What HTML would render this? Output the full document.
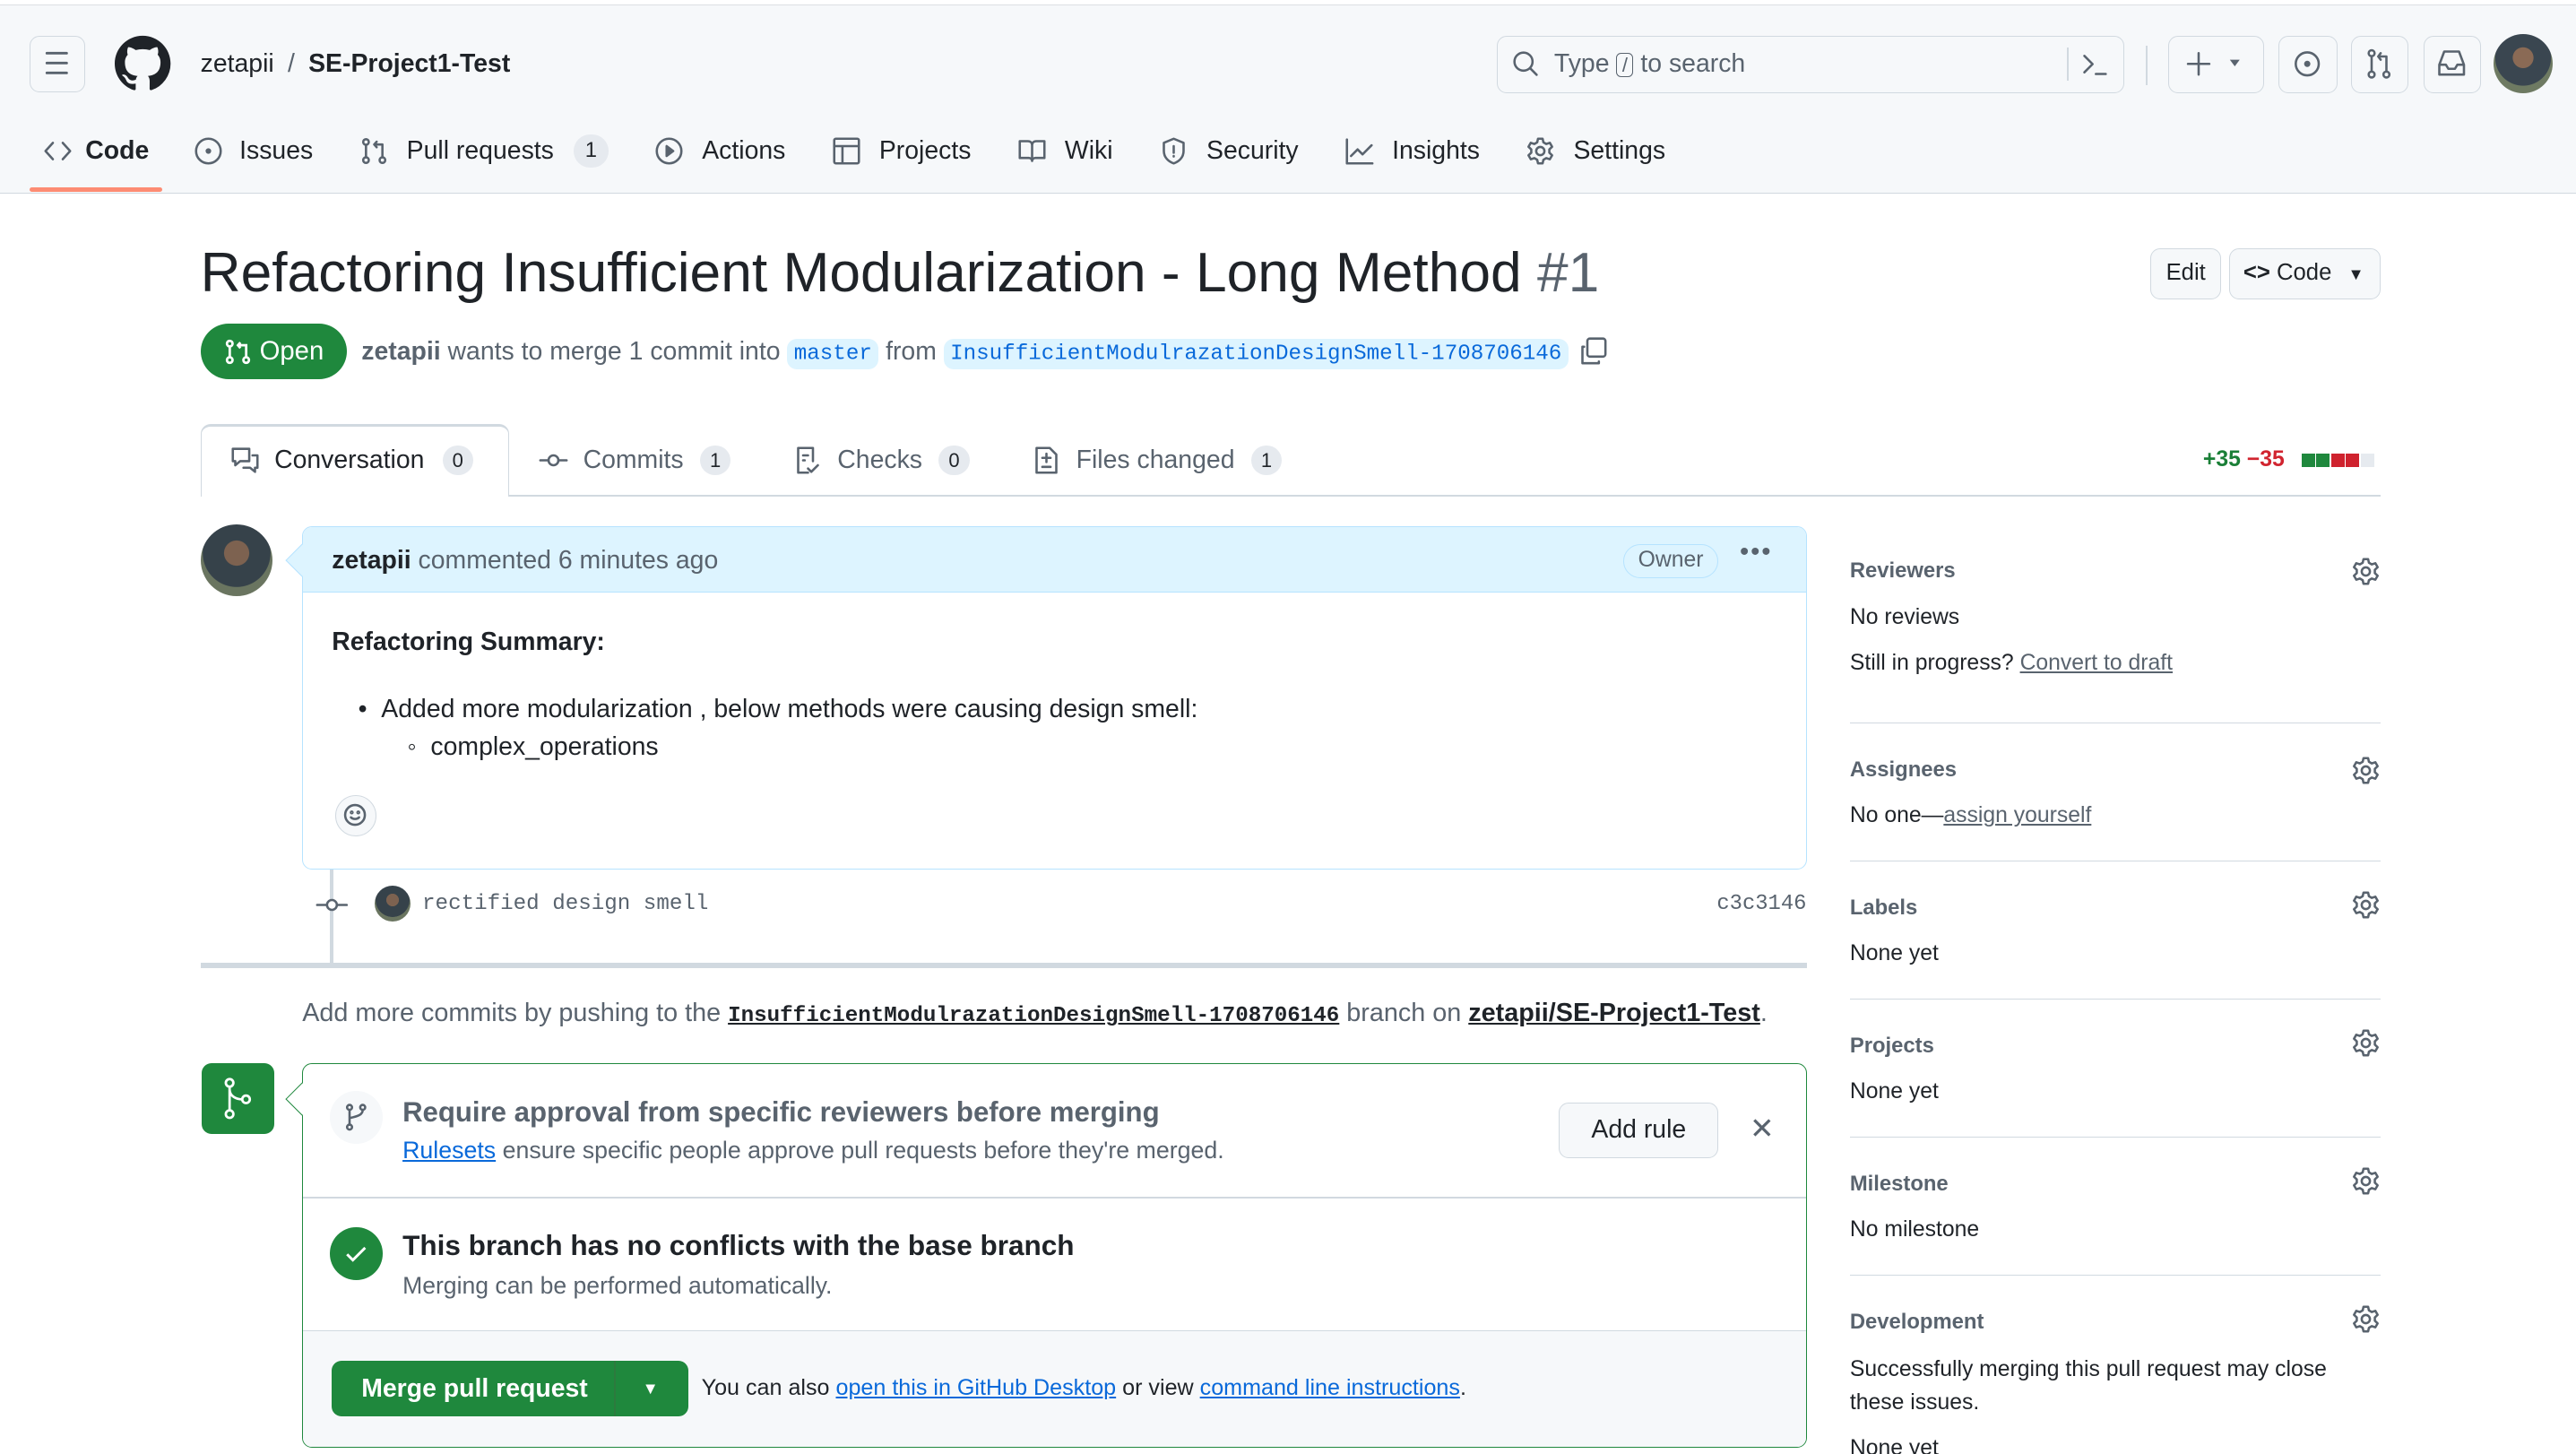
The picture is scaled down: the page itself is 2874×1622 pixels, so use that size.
<!DOCTYPE html>
<html><head><meta charset="utf-8"><style>
*{box-sizing:border-box;margin:0;padding:0}
html,body{width:2874px;height:1622px;overflow:hidden;background:#fff}
#w{zoom:1.83291;width:1568px;height:885px;position:relative;font-family:"Liberation Sans",sans-serif;color:#1f2328;font-size:14px}
.a{position:absolute}
.mono{font-family:"Liberation Mono",monospace}
.btn{position:absolute;border:1px solid #d1d9e0;border-radius:6px;background:#f6f8fa}
svg{display:block}
.ic{fill:none;stroke:#59636e;stroke-width:1.4;stroke-linecap:round;stroke-linejoin:round}
.cnt{display:inline-block;background:#e6eaef;border-radius:10px;padding:0 6px;font-size:12px;line-height:18px;margin-left:6px;color:#1f2328}
.sb .h{font-size:13px;font-weight:bold;color:#59636e}
.sb .t{font-size:13.5px;color:#1f2328}
.sb .l{border-top:1px solid #d1d9e0}
a{color:#0969da}
</style></head><body><div id="w">
<!-- header -->
<div class="a" style="left:0;top:3px;width:1568px;height:115px;background:#f6f8fa;border-top:1px solid #dcdfe3;border-bottom:1px solid #d1d9e0"></div>
<div class="btn" style="left:18px;top:22px;width:34px;height:34px"><svg width="32" height="32" class="ic"><path d="M10 10h12M10 16h12M10 22h12" stroke="#59636e" stroke-width="1.6"/></svg></div>
<svg class="a" style="left:70px;top:21px" width="34" height="36" viewBox="0 0 16 16"><path fill="#1f2328" d="M8 0C3.580 0 0 3.58 0 8c0 3.54 2.29 6.53 5.47 7.590.4.07.55-.17.55-.38 0-.19-.01-.82-.01-1.49-2.010.37-2.53-.49-2.69-.94-.09-.23-.48-.94-.82-1.13-.28-.15-.68-.52-.01-.53.63-.01 1.08.58 1.23.82.72 1.21 1.87.87 2.33.66.07-.52.28-.87.51-1.07-1.78-.2-3.64-.89-3.64-3.95 0-.87.31-1.59.82-2.15-.08-.2-.36-1.02.08-2.12 0 0 .67-.21 2.2.82.64-.18 1.32-.27 2-.27.68 0 1.36.09 2 .27 1.53-1.04 2.2-.82 2.2-.82.44 1.1.16 1.92.08 2.12.51.56.82 1.27.82 2.15 0 3.07-1.87 3.75-3.65 3.95.29.25.54.73.54 1.48 0 1.07-.01 1.93-.01 2.2 0 .21.15.46.55.38A8.013 8.013 0 0016 8c0-4.42-3.58-8-8-8z"/></svg>
<div class="a" style="left:122px;top:30px;font-size:15.5px">zetapii <span style="color:#59636e;margin:0 4px">/</span> <b>SE-Project1-Test</b></div>
<div class="btn" style="left:911px;top:22px;width:382px;height:35px;background:#f6f8fa"></div>
<svg class="a ic" style="left:920px;top:30px" width="18" height="18"><circle cx="7.5" cy="7.5" r="5.5"/><path d="M11.5 11.5l4 4"/></svg>
<div class="a" style="left:946px;top:30px;font-size:15.5px;color:#59636e">Type <span style="border:1px solid #59636e;border-radius:3px;font-size:12px;padding:0 3px">/</span> to search</div>
<div class="a" style="left:1258px;top:29px;width:1px;height:20px;background:#d1d9e0"></div>
<svg class="a ic" style="left:1266px;top:30px" width="18" height="18"><path d="M3 4l5 5-5 5M10 15h6"/></svg>
<div class="a" style="left:1306px;top:28px;width:1px;height:24px;background:#d1d9e0"></div>
<div class="btn" style="left:1320px;top:22px;width:58px;height:35px"><svg class="ic" width="56" height="33"><path d="M18 10v13M11.5 16.5h13"/><path d="M37 14h6l-3 4z" fill="#59636e" stroke="none"/></svg></div>
<div class="btn" style="left:1387px;top:22px;width:36px;height:35px"><svg class="ic" width="34" height="33"><circle cx="17" cy="16.5" r="7"/><circle cx="17" cy="16.5" r="1.2" fill="#59636e"/></svg></div>
<div class="btn" style="left:1431px;top:22px;width:35px;height:35px"><svg class="ic" width="33" height="33"><circle cx="12" cy="10" r="1.8"/><circle cx="12" cy="23" r="1.8"/><circle cx="21" cy="23" r="1.8"/><path d="M12 12v9M21 21v-9h-5M17.5 10l-1.5 2 1.5 2"/></svg></div>
<div class="btn" style="left:1475px;top:22px;width:35px;height:35px"><svg class="ic" width="33" height="33"><path d="M9 17l3-8h9l3 8v6H9zM9 17h4l1.5 2.5h4L20 17h4"/></svg></div>
<div class="a" style="left:1518px;top:21px;width:36px;height:36px;border-radius:50%;background:radial-gradient(circle at 50% 40%,#8a6a55 0 22%,#3a4650 23% 60%,#6e7a62 61%)"></div>
<!-- nav -->
<div class="a" style="left:26px;top:82px;font-size:15.5px;display:flex;align-items:center;white-space:nowrap">
<svg class="ic" width="18" height="18"><path d="M6 4L1.5 9 6 14M12 4l4.5 5L12 14"/></svg><b style="margin-left:8px">Code</b>
<svg class="ic" style="margin-left:27px" width="18" height="18"><circle cx="9" cy="9" r="7.5"/><circle cx="9" cy="9" r="1" fill="#59636e"/></svg><span style="margin-left:10px">Issues</span>
<svg class="ic" style="margin-left:28px" width="18" height="18"><circle cx="4" cy="3.5" r="1.7"/><circle cx="4" cy="14.5" r="1.7"/><circle cx="14" cy="14.5" r="1.7"/><path d="M4 5.2v7.6M14 12.8V5h-5M10.5 3.3L9 5l1.5 1.7"/></svg><span style="margin-left:11px">Pull requests</span><span class="cnt" style="margin-left:12px;font-size:13px;line-height:20px;padding:0 7px">1</span>
<svg class="ic" style="margin-left:28px" width="18" height="18"><circle cx="9" cy="9" r="7.5"/><path d="M7.5 6v6l4-3z" fill="#59636e"/></svg><span style="margin-left:11px">Actions</span>
<svg class="ic" style="margin-left:28px" width="18" height="18"><rect x="1.5" y="1.5" width="15" height="15" rx="1"/><path d="M1.5 6h15M6.5 6v10.5"/></svg><span style="margin-left:11px">Projects</span>
<svg class="ic" style="margin-left:28px" width="18" height="18"><path d="M1.5 3h5c1.5 0 2.5 1 2.5 2.5V15c0-1-1-1.8-2-1.8H1.5zM16.5 3h-5C10 3 9 4 9 5.5V15c0-1 1-1.8 2-1.8h5.5z"/></svg><span style="margin-left:11px">Wiki</span>
<svg class="ic" style="margin-left:28px" width="18" height="18"><path d="M9 1.5l6 2.5v5c0 4-3 6.5-6 7.5-3-1-6-3.5-6-7.5V4z"/><path d="M9 6v4M9 12v.3"/></svg><span style="margin-left:11px">Security</span>
<svg class="ic" style="margin-left:28px" width="18" height="18"><path d="M1.5 2v14.5H17M4 12l4-4 3 3 5.5-5.5"/></svg><span style="margin-left:11px">Insights</span>
<svg class="ic" style="margin-left:28px" width="18" height="18"><circle cx="9" cy="9" r="2.5"/><path d="M7.6 1.5h2.8l.5 2.2 1.7 1 2.2-.7 1.4 2.4-1.7 1.6v2l1.7 1.6-1.4 2.4-2.2-.7-1.7 1-.5 2.2H7.6l-.5-2.2-1.7-1-2.2.7-1.4-2.4L3.5 10V8L1.8 6.4l1.4-2.4 2.2.7 1.7-1z"/></svg><span style="margin-left:11px">Settings</span>
</div>
<div class="a" style="left:18px;top:114px;width:81px;height:3px;background:#fd8c73;border-radius:2px"></div>
<!-- title -->
<div class="a" style="left:122px;top:147px;font-size:34px;white-space:nowrap;letter-spacing:0">Refactoring Insufficient Modularization - Long Method <span style="color:#59636e">#1</span></div>
<div class="btn" style="left:1309px;top:151px;width:43px;height:31px;font-size:14px;text-align:center;line-height:29px">Edit</div>
<div class="btn" style="left:1357px;top:151px;width:92px;height:31px;font-size:14px;line-height:29px;padding-left:8px;white-space:nowrap"><span style="font-weight:bold">&lt;&gt;</span> Code <span style="font-size:10px;margin-left:6px">▼</span></div>
<div class="a" style="left:122px;top:197px;width:89px;height:34px;border-radius:17px;background:#1f883d;color:#fff;font-size:16px;line-height:34px;padding-left:14px;display:flex;align-items:center"><svg width="18" height="18" fill="none" stroke="#fff" stroke-width="1.5"><circle cx="4" cy="4" r="1.7"/><circle cx="4" cy="14" r="1.7"/><circle cx="14" cy="14" r="1.7"/><path d="M4 5.7v6.6M14 12.3V5h-5M10.5 3.3L9 5l1.5 1.7"/></svg><span style="margin-left:4px">Open</span></div>
<div class="a" style="left:220px;top:205px;font-size:15.5px;color:#59636e;white-space:nowrap"><b style="color:#59636e">zetapii</b> wants to merge 1 commit into <span class="mono" style="background:#ddf4ff;color:#0969da;font-size:13.2px;padding:2px 4px;border-radius:6px">master</span> from <span class="mono" style="background:#ddf4ff;color:#0969da;font-size:13.2px;padding:2px 4px;border-radius:6px">InsufficientModulrazationDesignSmell-1708706146</span></div>
<svg class="a ic" style="left:960px;top:204px" width="20" height="20"><rect x="6" y="2" width="11" height="11" rx="1.5"/><path d="M4 7H3v10h10v-1"/></svg>
<!-- tabs -->
<div class="a" style="left:122px;top:301px;width:1327px;height:1px;background:#d1d9e0"></div>
<div class="a" style="left:122px;top:258px;width:188px;height:44px;border:1px solid #d1d9e0;border-bottom:none;border-top:2px solid #d1d9e0;border-radius:6px 6px 0 0;background:#fff"></div>
<div class="a" style="left:140px;top:271px;font-size:15.5px;display:flex;align-items:center;white-space:nowrap;color:#1f2328">
<svg class="ic" width="18" height="18"><path d="M1.5 2h10v7.5H6L3 12V9.5H1.5zM13.5 6h3v7.5H15V16l-3-2.5H8"/></svg><span style="margin-left:9px">Conversation</span><span class="cnt" style="margin-left:11px">0</span>
<svg class="ic" style="margin-left:40px" width="18" height="18"><circle cx="9" cy="9" r="3"/><path d="M1 9h5M12 9h5"/></svg><span style="margin-left:9px;color:#59636e">Commits</span><span class="cnt" style="margin-left:10px">1</span>
<svg class="ic" style="margin-left:38px" width="18" height="18"><path d="M3 1.5h9v8M3 1.5v15h6M6 6h3M6 9h1M9 14l2 2 4-4"/></svg><span style="margin-left:9px;color:#59636e">Checks</span><span class="cnt" style="margin-left:10px">0</span>
<svg class="ic" style="margin-left:38px" width="18" height="18"><path d="M3 1.5h8l4 4v11H3zM9 5v5M6.5 7.5h5M6.5 13h5"/></svg><span style="margin-left:9px;color:#59636e">Files changed</span><span class="cnt" style="margin-left:10px">1</span>
</div>
<div class="a" style="left:1341px;top:272px;font-size:13.5px;font-weight:bold;white-space:nowrap"><span style="color:#1a7f37">+35</span> <span style="color:#d1242f">−35</span></div>
<div class="a" style="left:1401px;top:276px;display:flex;gap:1px"><i style="width:8px;height:8px;background:#1f883d"></i><i style="width:8px;height:8px;background:#1f883d"></i><i style="width:8px;height:8px;background:#cf222e"></i><i style="width:8px;height:8px;background:#cf222e"></i><i style="width:8px;height:8px;background:#e6eaef"></i></div>
<!-- comment -->
<div class="a" style="left:122px;top:319px;width:44px;height:44px;border-radius:50%;background:radial-gradient(circle at 50% 40%,#7d6250 0 22%,#36424a 23% 60%,#6a7560 61%)"></div>
<div class="a" style="left:184px;top:320px;width:916px;height:209px;border:1px solid #b6e3ff;border-radius:6px;overflow:hidden">
<div style="height:40px;background:#ddf4ff;border-bottom:1px solid #b6e3ff"></div></div>
<div class="a" style="left:177px;top:334px;width:14px;height:14px;background:#ddf4ff;border-left:1px solid #b6e3ff;border-bottom:1px solid #b6e3ff;transform:rotate(45deg)"></div>
<div class="a" style="left:202px;top:332px;font-size:15.5px;color:#59636e;white-space:nowrap"><b style="color:#1f2328">zetapii</b> commented 6 minutes ago</div>
<div class="a" style="left:988px;top:331px;width:58px;height:21px;border:1px solid #b6e3ff;border-radius:11px;font-size:13.5px;color:#59636e;text-align:center;line-height:19px">Owner</div>
<div class="a" style="left:1059px;top:327px;font-size:16px;color:#59636e;letter-spacing:1px">•••</div>
<div class="a" style="left:202px;top:382px;font-size:15.5px;font-weight:bold">Refactoring Summary:</div>
<div class="a" style="left:218px;top:420px;font-size:15.5px;line-height:23px;white-space:nowrap">• &nbsp;Added more modularization , below methods were causing design smell:<br><span style="margin-left:30px">◦ &nbsp;complex_operations</span></div>
<div class="a" style="left:204px;top:484px;width:25px;height:25px;border:1px solid #d1d9e0;border-radius:50%;background:#f6f8fa"><svg class="ic" width="23" height="23"><circle cx="11.5" cy="11.5" r="6"/><path d="M9 13c1.3 1.3 3.7 1.3 5 0"/><circle cx="9.5" cy="10" r=".5"/><circle cx="13.5" cy="10" r=".5"/></svg></div>
<div class="a" style="left:201px;top:529px;width:2px;height:58px;background:#d1d9e0"></div>
<svg class="a ic" style="left:192px;top:542px" width="20" height="18"><circle cx="10" cy="9" r="3" fill="#fff"/><path d="M1 9h6M13 9h6"/></svg>
<div class="a" style="left:228px;top:539px;width:22px;height:22px;border-radius:50%;background:radial-gradient(circle at 50% 40%,#7d6250 0 22%,#36424a 23% 60%,#6a7560 61%)"></div>
<div class="a mono" style="left:257px;top:543px;font-size:13.2px;color:#59636e">rectified design smell</div>
<div class="a mono" style="left:1045px;top:543px;font-size:13px;color:#59636e">c3c3146</div>
<div class="a" style="left:122px;top:586px;width:978px;height:3px;background:#d1d9e0"></div>
<div class="a" style="left:184px;top:608px;font-size:15.7px;color:#59636e;white-space:nowrap">Add more commits by pushing to the <b class="mono" style="color:#1f2328;font-size:13.2px;text-decoration:underline">InsufficientModulrazationDesignSmell-1708706146</b> branch on <b style="color:#1f2328;text-decoration:underline">zetapii/SE-Project1-Test</b>.</div>
<!-- merge box -->
<div class="a" style="left:123px;top:647px;width:44px;height:43px;border-radius:6px;background:#1f883d"><svg width="44" height="43" fill="none" stroke="#fff" stroke-width="1.5"><circle cx="17" cy="12" r="2.3"/><circle cx="17" cy="31" r="2.3"/><circle cx="27" cy="22" r="2.3"/><path d="M17 14.3v14.4M17 16c0 4 4 6 7.7 6"/></svg></div>
<div class="a" style="left:184px;top:647px;width:916px;height:234px;border:1px solid #1f883d;border-radius:6px;overflow:hidden;background:#fff">
<div style="position:absolute;left:0;top:81px;width:100%;height:1px;background:#d1d9e0"></div>
<div style="position:absolute;left:0;top:162px;width:100%;height:72px;background:#f6f8fa;border-top:1px solid #d1d9e0"></div></div>
<div class="a" style="left:177px;top:662px;width:14px;height:14px;background:#fff;border-left:1px solid #1f883d;border-bottom:1px solid #1f883d;transform:rotate(45deg)"></div>
<div class="a" style="left:201px;top:664px;width:32px;height:32px;border-radius:50%;background:#f6f8fa"><svg class="ic" width="32" height="32"><circle cx="12" cy="10" r="1.5"/><circle cx="12" cy="22" r="1.5"/><circle cx="20" cy="10" r="1.5"/><path d="M12 11.5v9M20 11.5c0 3-3 4-8 5"/></svg></div>
<div class="a" style="left:245px;top:667px;font-size:17px;font-weight:bold;color:#59636e;white-space:nowrap">Require approval from specific reviewers before merging</div>
<div class="a" style="left:245px;top:692px;font-size:14.6px;color:#59636e;white-space:nowrap"><a style="text-decoration:underline">Rulesets</a> ensure specific people approve pull requests before they're merged.</div>
<div class="btn" style="left:949px;top:671px;width:97px;height:34px;font-size:15.5px;text-align:center;line-height:32px">Add rule</div>
<div class="a" style="left:1065px;top:676px;font-size:18px;color:#59636e">✕</div>
<div class="a" style="left:201px;top:747px;width:32px;height:32px;border-radius:50%;background:#1f883d"><svg width="32" height="32" fill="none" stroke="#fff" stroke-width="1.6"><path d="M10.5 16.5l3.5 3.5 7.5-7.5"/></svg></div>
<div class="a" style="left:245px;top:748px;font-size:17.2px;font-weight:bold;white-space:nowrap">This branch has no conflicts with the base branch</div>
<div class="a" style="left:245px;top:774px;font-size:14.5px;color:#59636e">Merging can be performed automatically.</div>
<div class="a" style="left:202px;top:828px;width:217px;height:34px;border-radius:6px;background:#1f883d;color:#fff;font-size:15.5px;font-weight:bold;line-height:34px;padding-left:18px">Merge pull request<span style="position:absolute;left:172px;top:0;width:1px;height:34px;background:#2d7a3e"></span><span style="position:absolute;left:189px;font-size:10px">▼</span></div>
<div class="a" style="left:427px;top:837px;font-size:13.7px;white-space:nowrap">You can also <a style="text-decoration:underline">open this in GitHub Desktop</a> or view <a style="text-decoration:underline">command line instructions</a>.</div>
<!-- sidebar -->
<div class="sb">
<div class="a h" style="left:1126px;top:340px">Reviewers</div><div class="a t" style="left:1126px;top:368px">No reviews</div><div class="a t" style="left:1126px;top:396px">Still in progress? <a style="color:#59636e;text-decoration:underline">Convert to draft</a></div>
<div class="a l" style="left:1126px;top:440px;width:323px"></div>
<div class="a h" style="left:1126px;top:461px">Assignees</div><div class="a t" style="left:1126px;top:489px">No one—<a style="color:#59636e;text-decoration:underline">assign yourself</a></div>
<div class="a l" style="left:1126px;top:524px;width:323px"></div>
<div class="a h" style="left:1126px;top:545px">Labels</div><div class="a t" style="left:1126px;top:573px">None yet</div>
<div class="a l" style="left:1126px;top:608px;width:323px"></div>
<div class="a h" style="left:1126px;top:629px">Projects</div><div class="a t" style="left:1126px;top:657px">None yet</div>
<div class="a l" style="left:1126px;top:692px;width:323px"></div>
<div class="a h" style="left:1126px;top:713px">Milestone</div><div class="a t" style="left:1126px;top:741px">No milestone</div>
<div class="a l" style="left:1126px;top:776px;width:323px"></div>
<div class="a h" style="left:1126px;top:797px">Development</div><div class="a t" style="left:1126px;top:824px;line-height:20px;width:310px">Successfully merging this pull request may close these issues.</div>
<div class="a t" style="left:1126px;top:874px">None yet</div>
</div>
<svg class="a ic" style="left:1431px;top:339px" width="18" height="18"><circle cx="9" cy="9" r="2.5"/><path d="M7.6 1.5h2.8l.5 2.2 1.7 1 2.2-.7 1.4 2.4-1.7 1.6v2l1.7 1.6-1.4 2.4-2.2-.7-1.7 1-.5 2.2H7.6l-.5-2.2-1.7-1-2.2.7-1.4-2.4L3.5 10V8L1.8 6.4l1.4-2.4 2.2.7 1.7-1z"/></svg>
<svg class="a ic" style="left:1431px;top:460px" width="18" height="18"><circle cx="9" cy="9" r="2.5"/><path d="M7.6 1.5h2.8l.5 2.2 1.7 1 2.2-.7 1.4 2.4-1.7 1.6v2l1.7 1.6-1.4 2.4-2.2-.7-1.7 1-.5 2.2H7.6l-.5-2.2-1.7-1-2.2.7-1.4-2.4L3.5 10V8L1.8 6.4l1.4-2.4 2.2.7 1.7-1z"/></svg>
<svg class="a ic" style="left:1431px;top:542px" width="18" height="18"><circle cx="9" cy="9" r="2.5"/><path d="M7.6 1.5h2.8l.5 2.2 1.7 1 2.2-.7 1.4 2.4-1.7 1.6v2l1.7 1.6-1.4 2.4-2.2-.7-1.7 1-.5 2.2H7.6l-.5-2.2-1.7-1-2.2.7-1.4-2.4L3.5 10V8L1.8 6.4l1.4-2.4 2.2.7 1.7-1z"/></svg>
<svg class="a ic" style="left:1431px;top:626px" width="18" height="18"><circle cx="9" cy="9" r="2.5"/><path d="M7.6 1.5h2.8l.5 2.2 1.7 1 2.2-.7 1.4 2.4-1.7 1.6v2l1.7 1.6-1.4 2.4-2.2-.7-1.7 1-.5 2.2H7.6l-.5-2.2-1.7-1-2.2.7-1.4-2.4L3.5 10V8L1.8 6.4l1.4-2.4 2.2.7 1.7-1z"/></svg>
<svg class="a ic" style="left:1431px;top:710px" width="18" height="18"><circle cx="9" cy="9" r="2.5"/><path d="M7.6 1.5h2.8l.5 2.2 1.7 1 2.2-.7 1.4 2.4-1.7 1.6v2l1.7 1.6-1.4 2.4-2.2-.7-1.7 1-.5 2.2H7.6l-.5-2.2-1.7-1-2.2.7-1.4-2.4L3.5 10V8L1.8 6.4l1.4-2.4 2.2.7 1.7-1z"/></svg>
<svg class="a ic" style="left:1431px;top:794px" width="18" height="18"><circle cx="9" cy="9" r="2.5"/><path d="M7.6 1.5h2.8l.5 2.2 1.7 1 2.2-.7 1.4 2.4-1.7 1.6v2l1.7 1.6-1.4 2.4-2.2-.7-1.7 1-.5 2.2H7.6l-.5-2.2-1.7-1-2.2.7-1.4-2.4L3.5 10V8L1.8 6.4l1.4-2.4 2.2.7 1.7-1z"/></svg>
</div></body></html>
